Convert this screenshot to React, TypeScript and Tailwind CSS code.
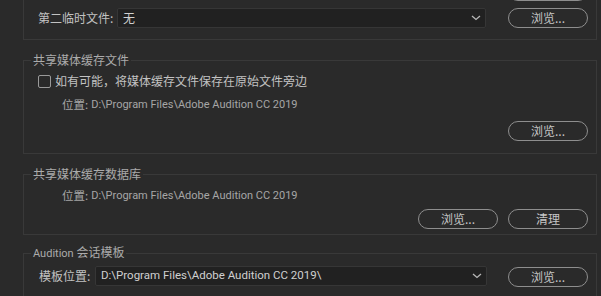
import type { ReactNode } from "react"

const latin = "font-['Roboto','Noto_Sans_CJK_SC',sans-serif]"

function Chevron() {
  return (
    <svg width="10" height="6" viewBox="0 0 10 6" className="shrink-0">
      <path d="M1 1l4 3.5L9 1" fill="none" stroke="#b8b8b8" strokeWidth="1.3" />
    </svg>
  )
}

function Browse({ label = "浏览..." }: { label?: string }) {
  return (
    <button
      type="button"
      className="flex h-[20px] w-[80px] shrink-0 items-center justify-center rounded-full border-[1.5px] border-[#8e8e8e] text-[12px] leading-none text-[#c6c6c6]"
    >
      {label}
    </button>
  )
}

function Select({ value, width, mono }: { value: string; width: string; mono?: boolean }) {
  return (
    <div className={`flex h-[20px] items-center justify-between rounded-[2px] border border-[#363636] bg-[#212121] pl-[5px] pr-[4px] ${width}`}>
      <span className={mono ? `${latin} text-[11.5px] text-[#d0d0d0]` : "text-[12px] text-[#d0d0d0]"}>{value}</span>
      <Chevron />
    </div>
  )
}

function Group({ title, className, children }: { title: ReactNode; className: string; children: ReactNode }) {
  return (
    <fieldset className={`border border-[#393939] ${className}`}>
      <legend className="ml-[7px] px-[2px] text-[12px] leading-[16px] text-[#ababab]">{title}</legend>
      {children}
    </fieldset>
  )
}

export default function App() {
  return (
    <div className="h-[296px] w-[601px] overflow-hidden bg-[#2a2a2a] font-['Noto_Sans_CJK_SC','Noto_Sans',sans-serif]">
      <div className="-mt-[32px] ml-[23px] w-[574px]">
        <div className="flex flex-col gap-[7px] border border-[#393939] pb-[11px] pl-[14px] pr-[8px] pt-[12px]">
          {/* previous row, only the bottom edge of its button shows */}
          <div className="flex h-[20px] items-center justify-end">
            <div className="h-[20px] w-[80px] rounded-full border-[1.5px] border-[#8e8e8e]" />
          </div>
          <div className="flex h-[20px] items-center">
            <span className="w-[79px] text-[12px] text-[#c2c2c2]">第二临时文件:</span>
            <Select value="无" width="w-[369px]" />
            <div className="ml-auto">
              <Browse />
            </div>
          </div>
        </div>

        <Group title="共享媒体缓存文件" className="mt-[12px]">
          <div className="pb-[12px] pl-[14px] pr-[8px] pt-[5px]">
            <div className="flex h-[16px] items-center gap-[4px]">
              <span className="h-[13px] w-[13px] rounded-[2px] border-[1.5px] border-[#9a9a9a]" />
              <span className="text-[12px] text-[#c2c2c2]">如有可能，将媒体缓存文件保存在原始文件旁边</span>
            </div>
            <div className="mt-[8px] flex h-[16px] items-center pl-[24px] text-[11.5px] text-[#a6a6a6]">
              位置: <span className={`${latin} ml-[3px] text-[11px]`}>D:\Program Files\Adobe Audition CC 2019</span>
            </div>
            <div className="mt-[8px] flex justify-end">
              <Browse />
            </div>
          </div>
        </Group>

        <Group title="共享媒体缓存数据库" className="mt-[12px]">
          <div className="pb-[5px] pl-[38px] pr-[8px] pt-[6px]">
            <div className="flex h-[16px] items-center text-[11.5px] text-[#a6a6a6]">
              位置: <span className={`${latin} ml-[3px] text-[11px]`}>D:\Program Files\Adobe Audition CC 2019</span>
            </div>
            <div className="mt-[5px] flex justify-end gap-[10px]">
              <Browse />
              <Browse label="清理" />
            </div>
          </div>
        </Group>

        <Group
          title={
            <>
              <span className={`${latin} text-[11px]`}>Audition</span> 会话模板
            </>
          }
          className="mt-[9px]"
        >
          <div className="flex h-[40px] items-start pl-[15px] pr-[8px] pt-[3px]">
            <div className="flex h-[21px] items-center">
              <span className="w-[56px] text-[12px] text-[#c2c2c2]">模板位置:</span>
              <Select value="D:\Program Files\Adobe Audition CC 2019\" width="w-[392px]" mono />
            </div>
            <div className="ml-auto mt-[2px]">
              <Browse />
            </div>
          </div>
        </Group>
      </div>
    </div>
  )
}
